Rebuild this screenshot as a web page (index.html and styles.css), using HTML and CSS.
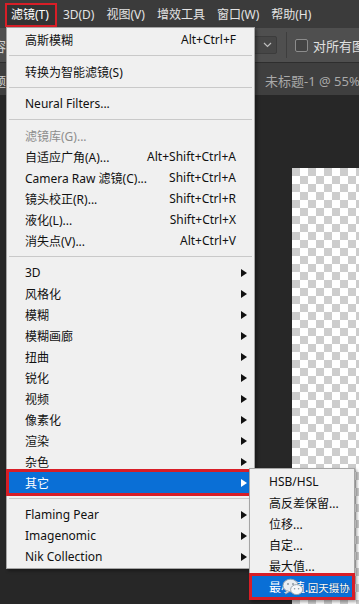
FILE: index.html
```html
<!DOCTYPE html>
<html lang="zh-CN">
<head>
    <meta charset="UTF-8">
    <link rel="stylesheet" href="styles.css">
</head>
<body>
    <div class="app">
        <div class="menubar">
            <span class="mb-item active">滤镜(T)</span>
            <span class="mb-item">3D(D)</span>
            <span class="mb-item">视图(V)</span>
            <span class="mb-item">增效工具</span>
            <span class="mb-item">窗口(W)</span>
            <span class="mb-item">帮助(H)</span>
        </div>
        <div class="optionsbar">
            <span class="edge">容</span>
            <div class="select">
                <svg width="9" height="6" viewBox="0 0 9 6"><path d="M1 1 L4.5 4.5 L8 1" fill="none" stroke="#bdbdbd" stroke-width="1.2"/></svg>
            </div>
            <div class="vsep"></div>
            <span class="checkbox"></span>
            <span class="opt-label">对所有图层取样</span>
        </div>
        <div class="tabbar">
            <span class="edge">题</span>
            <span class="doc-tab">未标题-1 @ 55% (RGB/8)</span>
        </div>
        <div class="workspace">
            <div class="canvas"></div>
        </div>
    </div>

    <!-- 滤镜 菜单 -->
    <div class="menu dropdown">
        <div class="item"><span class="label">高斯模糊</span><span class="key">Alt+Ctrl+F</span></div>
        <div class="sep"></div>
        <div class="item"><span class="label">转换为智能滤镜(S)</span></div>
        <div class="sep"></div>
        <div class="item"><span class="label">Neural Filters...</span></div>
        <div class="sep"></div>
        <div class="item disabled"><span class="label">滤镜库(G)...</span></div>
        <div class="item"><span class="label">自适应广角(A)...</span><span class="key">Alt+Shift+Ctrl+A</span></div>
        <div class="item"><span class="label">Camera Raw 滤镜(C)...</span><span class="key">Shift+Ctrl+A</span></div>
        <div class="item"><span class="label">镜头校正(R)...</span><span class="key">Shift+Ctrl+R</span></div>
        <div class="item"><span class="label">液化(L)...</span><span class="key">Shift+Ctrl+X</span></div>
        <div class="item"><span class="label">消失点(V)...</span><span class="key">Alt+Ctrl+V</span></div>
        <div class="sep"></div>
        <div class="item"><span class="label">3D</span><span class="arrow"></span></div>
        <div class="item"><span class="label">风格化</span><span class="arrow"></span></div>
        <div class="item"><span class="label">模糊</span><span class="arrow"></span></div>
        <div class="item"><span class="label">模糊画廊</span><span class="arrow"></span></div>
        <div class="item"><span class="label">扭曲</span><span class="arrow"></span></div>
        <div class="item"><span class="label">锐化</span><span class="arrow"></span></div>
        <div class="item"><span class="label">视频</span><span class="arrow"></span></div>
        <div class="item"><span class="label">像素化</span><span class="arrow"></span></div>
        <div class="item"><span class="label">渲染</span><span class="arrow"></span></div>
        <div class="item"><span class="label">杂色</span><span class="arrow"></span></div>
        <div class="item hl"><span class="label">其它</span><span class="arrow"></span></div>
        <div class="sep"></div>
        <div class="item"><span class="label">Flaming Pear</span><span class="arrow"></span></div>
        <div class="item"><span class="label">Imagenomic</span><span class="arrow"></span></div>
        <div class="item"><span class="label">Nik Collection</span><span class="arrow"></span></div>
    </div>

    <!-- 其它 子菜单 -->
    <div class="menu submenu">
        <div class="item"><span class="label">HSB/HSL</span></div>
        <div class="item"><span class="label">高反差保留...</span></div>
        <div class="item"><span class="label">位移...</span></div>
        <div class="item"><span class="label">自定...</span></div>
        <div class="item"><span class="label">最大值...</span></div>
        <div class="item hl">
            <span class="label">最小值...</span>
            <span class="wm">
                <svg width="22" height="18" viewBox="0 0 22 18">
                    <ellipse cx="8.5" cy="7.5" rx="7.5" ry="6.3" fill="#e8edf2" stroke="#9aa4ad" stroke-width="1"/>
                    <path d="M4.5 12.5 L3.5 16 L7.5 13.6 Z" fill="#e8edf2" stroke="#9aa4ad" stroke-width="0.8"/>
                    <ellipse cx="14.6" cy="11.6" rx="6" ry="5" fill="#f5f7f9" stroke="#9aa4ad" stroke-width="1"/>
                    <circle cx="6" cy="6" r="1" fill="#8a96a0"/>
                    <circle cx="11" cy="6" r="1" fill="#8a96a0"/>
                    <circle cx="12.6" cy="10.8" r="0.8" fill="#8a96a0"/>
                    <circle cx="16.6" cy="10.8" r="0.8" fill="#8a96a0"/>
                </svg>
                <span class="wm-text">.回天摄协</span>
            </span>
        </div>
    </div>
</body>
</html>
```

FILE: styles.css
```css
body {
    margin: 0;
    padding: 0;
    width: 359px;
    height: 604px;
    overflow: hidden;
    position: relative;
    background: #272727;
    font-family: "Noto Sans", "Noto Sans CJK SC", sans-serif;
}

.app {
    display: flex;
    flex-direction: column;
    height: 604px;
}

/* 顶部菜单栏 */
.menubar {
    height: 28px;
    box-sizing: border-box;
    padding: 3px 0 0 5px;
    display: flex;
    background: #3b3b3b;
}

.mb-item {
    box-sizing: border-box;
    height: 24px;
    line-height: 19px;
    padding: 0 4px;
    border: 2px solid transparent;
    color: #e4e4e4;
    font-size: 12px;
    white-space: nowrap;
}

.mb-item.active {
    padding-right: 6px;
    border-color: #d81e27;
    background: #333;
    color: #fff;
}

/* 选项栏 */
.optionsbar {
    height: 34px;
    display: flex;
    align-items: center;
    background: #4f4f4f;
    overflow: hidden;
}

.edge {
    width: 6px;
    flex-shrink: 0;
    display: flex;
    justify-content: flex-end;
    overflow: hidden;
    color: #d0d0d0;
    font-size: 13px;
}

.select {
    width: 29px;
    height: 18px;
    margin-left: 242px;
    box-sizing: border-box;
    border: 1px solid #3c3c3c;
    border-radius: 2px;
    background: #464646;
    display: flex;
    align-items: center;
    justify-content: flex-end;
    padding-right: 4px;
    flex-shrink: 0;
}

.vsep {
    width: 1px;
    height: 26px;
    margin-left: 9px;
    background: #3e3e3e;
    flex-shrink: 0;
}

.checkbox {
    width: 11px;
    height: 11px;
    margin-left: 8px;
    border: 1px solid #8c8c8c;
    border-radius: 2px;
    background: #444;
    flex-shrink: 0;
}

.opt-label {
    margin-left: 5px;
    color: #e0e0e0;
    font-size: 13px;
    white-space: nowrap;
}

/* 文档标签栏 */
.tabbar {
    height: 33px;
    box-sizing: border-box;
    padding-top: 3px;
    border-top: 1px solid #2e2e2e;
    display: flex;
    align-items: center;
    background: #3f3f3f;
    overflow: hidden;
}

.doc-tab {
    margin-left: 259px;
    color: #a9a9a9;
    font-size: 13px;
    white-space: nowrap;
}

/* 画布 */
.workspace {
    flex: 1;
    padding: 73px 0 0 292px;
    background: #272727;
    display: flex;
}

.canvas {
    flex: 1;
    background: repeating-conic-gradient(#fff 0 25%, #cdcdcd 0 50%) 0 0 / 16px 16px;
}

/* 菜单 */
.menu {
    position: absolute;
    box-sizing: border-box;
    background: #f0f0f0;
    border: 1px solid #a5a5a5;
    box-shadow: 2px 2px 3px rgba(0, 0, 0, 0.35);
    font-size: 12px;
    color: #111;
}

.dropdown {
    left: 6px;
    top: 27px;
    width: 249px;
    padding: 1px 0;
}

.submenu {
    left: 249px;
    top: 468px;
    width: 106px;
    padding: 2px 0;
}

.item {
    position: relative;
    height: 21px;
    margin: 0 2px;
    padding: 0 5px 0 16px;
    display: flex;
    align-items: center;
    white-space: nowrap;
}

.submenu .item {
    padding-left: 17px;
}

.item .label {
    flex: 1;
}

.item .key {
    margin-right: 11px;
}

.item.disabled {
    color: #8d8d8d;
}

.arrow {
    width: 0;
    height: 0;
    border-left: 6px solid #111;
    border-top: 4px solid transparent;
    border-bottom: 4px solid transparent;
}

.item.hl {
    background: #0a6fd6;
    color: #fff;
    outline: 3px solid #d81e27;
}

.item.hl .arrow {
    border-left-color: #fff;
}

.sep {
    height: 1px;
    margin: 5px 2px;
    background: #c9c9c9;
}

/* 水印 */
.wm {
    position: absolute;
    left: 30px;
    top: 2px;
    display: flex;
    align-items: center;
}

.wm-text {
    margin-left: 1px;
    font-size: 10.5px;
    color: #fff;
    text-shadow: 0 0 1px rgba(0, 0, 0, 0.6);
}
```
